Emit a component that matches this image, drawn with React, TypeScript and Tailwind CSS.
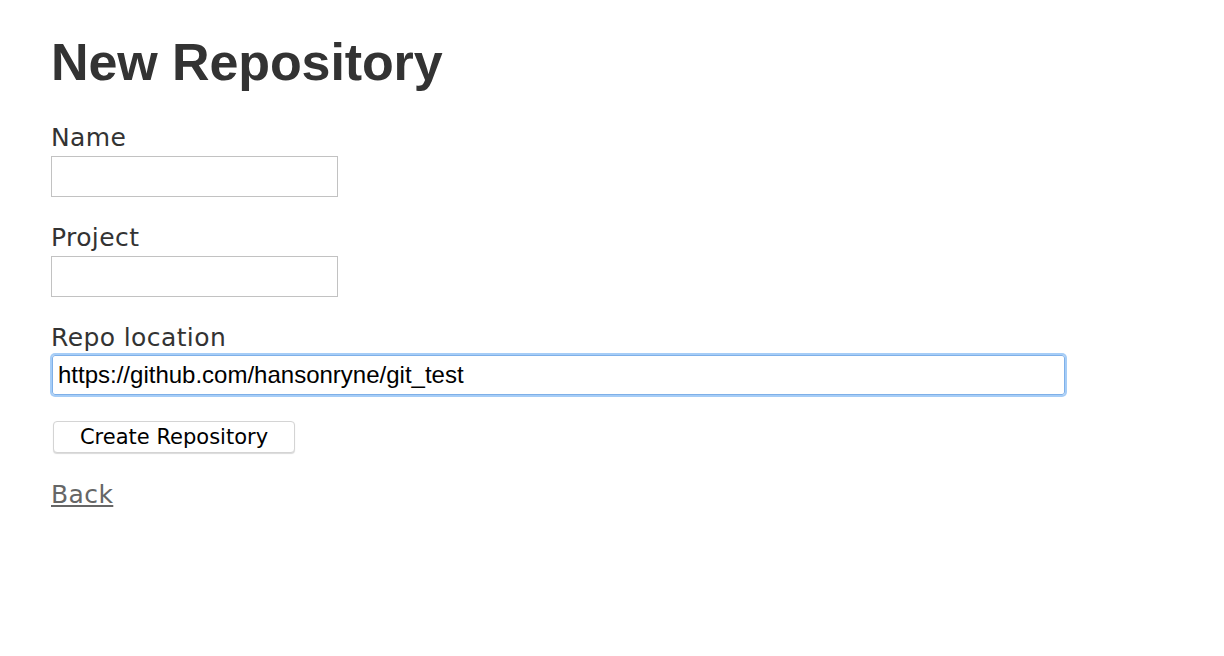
export default function App() {
  return (
    <div className="min-h-screen bg-white text-[#333] pl-[51px] pt-[33px]">
      <h1 className="font-['Liberation_Sans',Arial,sans-serif] font-bold text-[52px] leading-[58px] tracking-[-0.1px]">
        New Repository
      </h1>
      <form className="mt-[32px] flex flex-col items-start font-['DejaVu_Sans',Verdana,sans-serif]">
        <label className="text-[25px] leading-[30px] tracking-[0.4px]">Name</label>
        <input className="mt-[3px] w-[287px] h-[41px] border border-[#c2c2c2] px-2 text-[20px] outline-none" />
        <label className="mt-[26px] text-[25px] leading-[30px] tracking-[0.4px]">Project</label>
        <input className="mt-[3px] w-[287px] h-[41px] border border-[#c2c2c2] px-2 text-[20px] outline-none" />
        <label className="mt-[26px] text-[25px] leading-[30px] tracking-[0.4px]">Repo location</label>
        <input
          defaultValue="https://github.com/hansonryne/git_test"
          className="mt-[2px] ml-[1px] w-[1013px] h-[40px] rounded-[3px] border border-[#7fb0e8] ring-2 ring-[#a6cdf7] px-[5px] text-[24px] text-black font-['Liberation_Sans',Arial,sans-serif] outline-none"
        />
        <button
          type="button"
          className="mt-[26px] ml-[2px] w-[242px] h-[32px] rounded-[4px] border border-[#d4d4d4] bg-white shadow-[0_1px_1px_rgba(0,0,0,0.15)] text-[21px] leading-[24px] text-black"
        >
          Create Repository
        </button>
      </form>
      <a
        href="#"
        className="mt-[27px] inline-block text-[25px] leading-[30px] tracking-[0.4px] text-[#666] underline font-['DejaVu_Sans',Verdana,sans-serif]"
      >
        Back
      </a>
    </div>
  );
}
